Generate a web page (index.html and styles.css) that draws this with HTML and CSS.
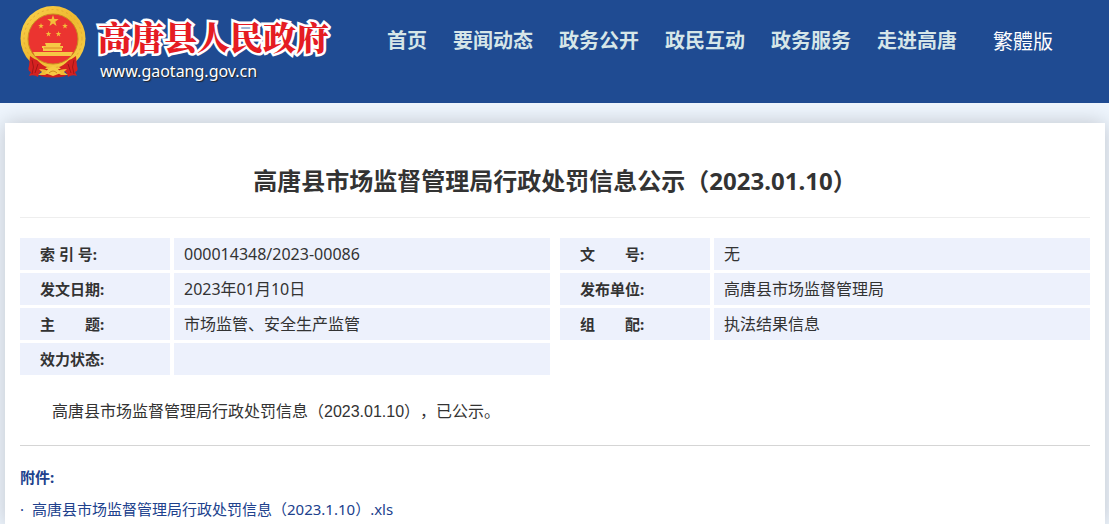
FILE: index.html
```html
<!DOCTYPE html>
<html lang="zh-CN">
<head>
<meta charset="utf-8">
<meta name="viewport" content="width=device-width, initial-scale=1.0">
<title>高唐县市场监督管理局行政处罚信息公示（2023.01.10）</title>
<link rel="stylesheet" href="styles.css">
</head>
<body>

<header class="header">
	<a class="logo" href="#">
		<svg class="emblem" viewBox="0 0 66 72" aria-hidden="true">
			<defs>
				<linearGradient id="gold" x1="0" y1="0" x2="1" y2="1">
					<stop offset="0" stop-color="#fbd54f"/>
					<stop offset=".5" stop-color="#eeb82f"/>
					<stop offset="1" stop-color="#f8d24c"/>
				</linearGradient>
				<path id="star" d="M0-6 1.4-1.9 5.7-1.9 2.3.7 3.5 4.9 0 2.4-3.5 4.9-2.3.7-5.7-1.9-1.4-1.9Z"/>
			</defs>
			<circle cx="33" cy="32.500" r="32.500" fill="url(#gold)"/>
			<circle cx="33" cy="32.500" r="29" fill="none" stroke="#e2aa32" stroke-width="1" stroke-dasharray="2 3"/>
			<circle cx="33" cy="33" r="25" fill="#eb3430" stroke="#c98b20" stroke-width="1"/>
			<g fill="#f3bd3a">
				<use href="#star" x="33" y="15"/>
				<use href="#star" transform="translate(21 20) scale(.5)"/>
				<use href="#star" transform="translate(45 20) scale(.5)"/>
				<use href="#star" transform="translate(28.500 28) scale(.5)"/>
				<use href="#star" transform="translate(38.500 28) scale(.5)"/>
			</g>
			<path d="M25 37H41L40 40H43V42H42V45H23V42H22V40H26ZM13 46H53L51 50H15Z" fill="#f6c845"/>
			<path d="M24 42H42" stroke="#d9761e" stroke-width=".8"/>
			<path d="M10 50Q14 53 17 54Q23 60 27 61L24 64Q19 65 18 71Q14 68 9 70L11 66Q7 65 9 60ZM56 50Q52 53 49 54Q43 60 39 61L42 64Q47 65 48 71Q52 68 57 70L55 66Q59 65 57 60Z" fill="#d42120"/>
			<path d="M12 54Q15 61 12 68M54 54Q51 61 54 68M18 58 15 67M48 58 51 67" fill="none" stroke="#a11616" stroke-width="1"/>
			<path d="M20 70Q33 73 46 70L42 63H24Z" fill="#c91d1c"/>
			<path d="M19 63Q26 63 30 66L25 69 18 69 22 66ZM47 63Q40 63 36 66L41 69 48 69 44 66Z" fill="#f0ba35"/>
			<path d="M33 60 38 63 41 67 33 70 25 67 28 63Z" fill="#f5c943"/>
			<path d="M29 67Q33 63 37 67" fill="none" stroke="#cc8a1c" stroke-width="1"/>
		</svg>
		<span class="site">
			<span class="site-name">高唐县人民政府</span>
			<span class="site-url">www.gaotang.gov.cn</span>
		</span>
	</a>
	<nav class="nav">
		<a href="#">首页</a>
		<a href="#">要闻动态</a>
		<a href="#">政务公开</a>
		<a href="#">政民互动</a>
		<a href="#">政务服务</a>
		<a href="#">走进高唐</a>
		<a href="#" class="lang" lang="zh-TW">繁體版</a>
	</nav>
</header>

<main class="main">
	<h1>高唐县市场监督管理局行政处罚信息公示（2023.01.10）</h1>

	<div class="info">
		<table>
			<tr><th scope="row">索 引 号:</th><td>000014348/2023-00086</td></tr>
			<tr><th scope="row">发文日期:</th><td>2023年01月10日</td></tr>
			<tr><th scope="row">主&emsp;&emsp;题:</th><td>市场监管、安全生产监管</td></tr>
			<tr><th scope="row">效力状态:</th><td></td></tr>
		</table>
		<table>
			<tr><th scope="row">文&emsp;&emsp;号:</th><td>无</td></tr>
			<tr><th scope="row">发布单位:</th><td>高唐县市场监督管理局</td></tr>
			<tr><th scope="row">组&emsp;&emsp;配:</th><td>执法结果信息</td></tr>
		</table>
	</div>

	<p class="content">高唐县市场监督管理局行政处罚信息（2023.01.10），已公示。</p>

	<section class="files">
		<h2>附件:</h2>
		<ul>
			<li><a href="#">高唐县市场监督管理局行政处罚信息（2023.1.10）.xls</a></li>
		</ul>
	</section>
</main>

</body>
</html>
```
FILE: styles.css
```css
*{
	box-sizing:border-box;
}

body{
	margin:0;
	background-color:#eef5fd;
	color:#333;
	font:16px/32px "Noto Sans", "Noto Sans CJK SC", sans-serif;
	text-spacing-trim:space-all;
}

a{
	color:inherit;
	text-decoration:none;
}

/* header */
.header{
	display:flex;
	align-items:flex-start;
	gap:58px;
	height:103px;
	padding:6px 20px 0;
	background-color:#1f4b92;
}

.logo{
	display:flex;
	gap:12px;
	color:#fff;
	white-space:nowrap;
}

.emblem{
	display:block;
	width:66px;
	height:72px;
}

.site{
	display:flex;
	flex-direction:column;
	padding-top:10px;
}

.site-name{
	color:#e51c23;
	font-family:"Noto Serif CJK SC", "Noto Sans CJK SC", sans-serif;
	font-size:33px;
	font-weight:900;
	line-height:40px;
	-webkit-text-stroke:5px #fff;
	stroke-linejoin:round;
	paint-order:stroke fill;
}

.site-url{
	padding:3px 0 0 2px;
	font-size:16px;
	line-height:24px;
	text-shadow:1px 1px 1px #222;
}

.nav{
	display:flex;
	gap:26px;
	padding-top:19px;
	color:#d6e6e8;
	font-size:20px;
	font-weight:bold;
	white-space:nowrap;
}

.nav .lang{
	margin-left:10px;
	color:#fff;
	font-family:"Noto Sans CJK TC", sans-serif;
	font-weight:normal;
}

/* article */
.main{
	margin:20px 4px 0 5px;
	padding:36px 15px 0;
	background-color:#fff;
	box-shadow:0 0 20px rgba(0,0,0,.2);
}

h1{
	margin:0 0 20px;
	padding-bottom:15px;
	border-bottom:1px solid #eee;
	font-size:24px;
	line-height:43px;
	text-align:center;
}

.info{
	display:grid;
	grid-template-columns:1fr 1fr;
	align-items:start;
	gap:10px;
}

.info table{
	width:100%;
	border-spacing:0;
	table-layout:fixed;
}

.info th, .info td{
	height:35px;
	padding:0 10px;
	border-bottom:3px solid #fff;
	background-color:#edf1fc;
	text-align:left;
}

.info th{
	width:154px;
	padding-left:20px;
	border-right:4px solid #fff;
	font-size:15px;
}

.content{
	margin:0;
	padding:18px 0 17px;
	border-bottom:1px solid #d5d5d5;
	font-family:"Liberation Sans", "Noto Sans CJK SC", sans-serif;
	text-indent:2em;
}

.files{
	padding-top:15px;
	color:#20418d;
	font-size:15px;
}

.files h2{
	margin:0;
	font-size:15px;
}

.files ul{
	margin:0;
	padding:0;
	list-style:none;
}

.files li::before{
	content:"·";
	margin-right:8px;
}
```
